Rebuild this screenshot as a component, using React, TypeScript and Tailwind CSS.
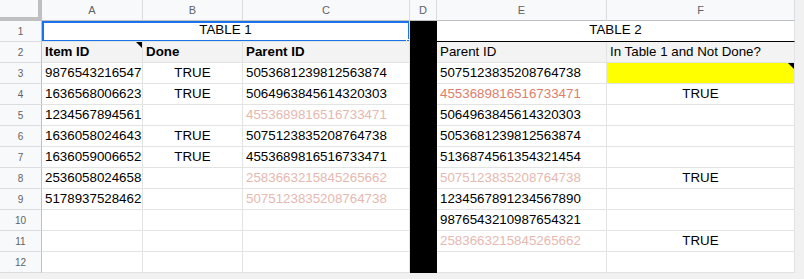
import React from "react";

type Row = {
  a?: string;
  b?: string;
  c?: string;
  cTone?: "pink" | "salmon";
  e?: string;
  eTone?: "pink" | "salmon";
  f?: string;
  yellow?: boolean;
};

const rows: Row[] = [
  { a: "9876543216547", b: "TRUE", c: "5053681239812563874", e: "5075123835208764738", yellow: true },
  { a: "1636568006623", b: "TRUE", c: "5064963845614320303", e: "4553689816516733471", eTone: "salmon", f: "TRUE" },
  { a: "1234567894561", c: "4553689816516733471", cTone: "pink", e: "5064963845614320303" },
  { a: "1636058024643", b: "TRUE", c: "5075123835208764738", e: "5053681239812563874" },
  { a: "1636059006652", b: "TRUE", c: "4553689816516733471", e: "5136874561354321454" },
  { a: "2536058024658", c: "2583663215845265662", cTone: "pink", e: "5075123835208764738", eTone: "pink", f: "TRUE" },
  { a: "5178937528462", c: "5075123835208764738", cTone: "pink", e: "1234567891234567890" },
  { e: "9876543210987654321" },
  { e: "2583663215845265662", eTone: "pink", f: "TRUE" },
  {},
];

function tone(t?: "pink" | "salmon") {
  if (t === "pink") return "text-[#e6b8af]";
  if (t === "salmon") return "text-[#dd7e6b]";
  return "text-black";
}

const cell = "border-r border-b border-[#e2e3e3] flex items-end pb-0 px-[3px] whitespace-nowrap overflow-hidden leading-normal";

function Note() {
  return (
    <div className="absolute top-0 right-0 w-0 h-0 border-l-[6px] border-l-transparent border-t-[6px] border-t-black" />
  );
}

function RowHead({ n }: { n: number }) {
  return (
    <div className="bg-[#f8f9fa] border-r border-b border-r-[#c0c0c0] border-b-[#dadce0] flex items-center justify-center text-[10px] text-[#5f6368]">
      {n}
    </div>
  );
}

export default function App() {
  return (
    <div className="w-[804px] h-[279px] bg-[#f1f1f1] overflow-hidden font-['Liberation_Sans',Arial,sans-serif] text-[13.33px]">
      <div className="grid grid-cols-[42px_101px_100px_167px_27px_170px_188px] grid-rows-[repeat(13,21px)] w-[795px] bg-white">
        {/* column headers */}
        <div className="bg-[#f8f9fa] border-r-4 border-b-4 border-[#c0c0c0]" />
        {["A", "B", "C", "D", "E", "F"].map((l) => (
          <div
            key={l}
            className="bg-[#f8f9fa] border-r border-b border-r-[#dadce0] border-b-[#c0c0c0] flex items-center justify-center text-[11px] text-[#5f6368]"
          >
            {l}
          </div>
        ))}

        {/* black column D */}
        <div className="col-start-5 row-start-2 row-span-12 bg-black" />

        {/* row 1 */}
        <RowHead n={1} />
        <div className={`${cell} col-span-3 justify-center pb-[1px] relative z-10`}>
          <span>TABLE 1</span>
          <div className="absolute top-0 left-0 right-[-1px] bottom-[-1px] border-2 border-[#1a73e8]" />
          <div className="absolute right-[-4px] bottom-[-5px] w-[7px] h-[7px] bg-[#1a73e8] border border-white" />
        </div>
        <div className="col-span-2 border-r border-b border-r-[#e2e3e3] border-b-black flex items-end justify-center pb-[1px]">
          <span>TABLE 2</span>
        </div>

        {/* row 2 */}
        <RowHead n={2} />
        <div className={`${cell} bg-[#f3f3f3] font-bold relative`}>
          Item ID
          <Note />
        </div>
        <div className={`${cell} bg-[#f3f3f3] font-bold`}>Done</div>
        <div className={`${cell} bg-[#f3f3f3] font-bold`}>Parent ID</div>
        <div className={`${cell} bg-[#f3f3f3]`}>Parent ID</div>
        <div className={`${cell} bg-[#f3f3f3]`}>In Table 1 and Not Done?</div>

        {rows.map((r, i) => (
          <React.Fragment key={i}>
            <RowHead n={i + 3} />
            <div className={`${cell} text-black`}>{r.a}</div>
            <div className={`${cell} justify-center text-black`}>{r.b}</div>
            <div className={`${cell} ${tone(r.cTone)}`}>{r.c}</div>
            <div className={`${cell} ${tone(r.eTone)}`}>{r.e}</div>
            <div className={`${cell} justify-center text-black relative ${r.yellow ? "bg-[#ffff00]" : ""}`}>
              {r.f}
              {r.yellow ? <Note /> : null}
            </div>
          </React.Fragment>
        ))}
      </div>
    </div>
  );
}
